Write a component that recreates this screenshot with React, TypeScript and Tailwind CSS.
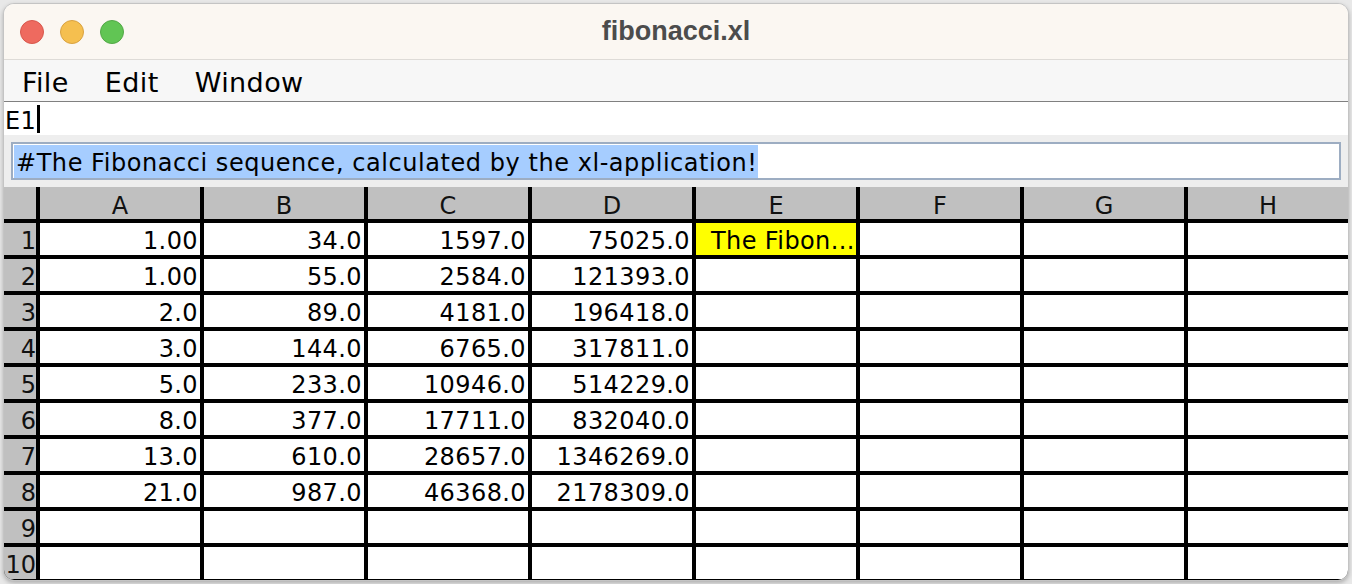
const columns = ["A", "B", "C", "D", "E", "F", "G", "H"];

const data: string[][] = [
  ["1.00", "34.0", "1597.0", "75025.0"],
  ["1.00", "55.0", "2584.0", "121393.0"],
  ["2.0", "89.0", "4181.0", "196418.0"],
  ["3.0", "144.0", "6765.0", "317811.0"],
  ["5.0", "233.0", "10946.0", "514229.0"],
  ["8.0", "377.0", "17711.0", "832040.0"],
  ["13.0", "610.0", "28657.0", "1346269.0"],
  ["21.0", "987.0", "46368.0", "2178309.0"],
];

const font = { fontFamily: '"DejaVu Sans", sans-serif' };

function TrafficLights() {
  return (
    <div className="absolute left-[16px] top-[16px] flex gap-[16px]">
      <span className="h-[24px] w-[24px] rounded-full border border-[#d8574c] bg-[#ee6a5f]" />
      <span className="h-[24px] w-[24px] rounded-full border border-[#d9a241] bg-[#f5bf4f]" />
      <span className="h-[24px] w-[24px] rounded-full border border-[#53a847] bg-[#61c554]" />
    </div>
  );
}

function Cell({ row, col }: { row: number; col: number }) {
  if (row === 0 && col === 4) {
    return (
      <div className="flex items-center bg-[#ffff00] pl-[15px] pt-[4px] text-[24px] tracking-[0.4px] text-black">
        The Fibon...
      </div>
    );
  }
  const value = data[row]?.[col];
  return (
    <div className="flex items-center justify-end bg-white pr-[2px] pt-[4px] text-[24px] tracking-[0.4px] text-black">
      {value ?? ""}
    </div>
  );
}

export default function App() {
  return (
    <div className="h-[584px] w-[1352px] bg-[#e8e8e8] pl-[3px] pt-[3px]" style={font}>
      <div className="flex h-[578px] w-[1346px] flex-col overflow-hidden rounded-[11px] border border-[#c4c4c4] bg-white shadow-[0_2px_4px_rgba(0,0,0,0.25)]">
        {/* Title bar */}
        <div className="relative flex h-[56px] items-center justify-center border-b border-[#dedbd7] bg-[#fbf7f2]">
          <TrafficLights />
          <span
            className="text-[27px] font-bold text-[#4c4c4c]"
            style={{ fontFamily: '"Liberation Sans", Arial, sans-serif' }}
          >
            fibonacci.xl
          </span>
        </div>

        {/* Menu bar */}
        <div className="flex h-[42px] items-center gap-[36px] border-b border-[#808080] bg-[#f7f7f7] pl-[18px] pt-[6px] text-[27px] tracking-[0.4px] text-black">
          <span>File</span>
          <span>Edit</span>
          <span>Window</span>
        </div>

        {/* Current cell */}
        <div className="flex h-[33px] items-center bg-white pl-[1px] text-[24px] tracking-[0.4px] text-black">
          <span className="pt-[4px]">E1</span>
          <span className="ml-[1px] h-[28px] w-[3px] bg-black" />
        </div>

        {/* Editor */}
        <div className="flex h-[52px] items-center bg-[#eeeeee] px-[7px]">
          <div className="flex h-[38px] w-full items-center border-2 border-[#9dadc2] bg-white pl-[1px]">
            <span className="flex h-[33px] items-center bg-[#a6cdff] pl-[2px] pr-[1px] pt-[4px] text-[24px] tracking-[0.55px] text-black">
              #The Fibonacci sequence, calculated by the xl-application!
            </span>
          </div>
        </div>

        {/* Sheet */}
        <div className="grid flex-1 grid-cols-[32px_repeat(8,160px)] grid-rows-[32px_repeat(10,32px)] gap-[4px] bg-black">
          <div className="bg-[#c0c0c0]" />
          {columns.map((c) => (
            <div key={c} className="flex items-center justify-center bg-[#c0c0c0] pt-[5px] text-[24px] text-[#111]">
              {c}
            </div>
          ))}
          {Array.from({ length: 10 }).map((_, r) => (
            <div key={r} className="contents">
              <div className="flex items-center justify-end bg-[#c0c0c0] pt-[4px] text-[24px] text-[#111]">
                {r + 1}
              </div>
              {columns.map((c, ci) => (
                <Cell key={c} row={r} col={ci} />
              ))}
            </div>
          ))}
        </div>
      </div>
    </div>
  );
}
